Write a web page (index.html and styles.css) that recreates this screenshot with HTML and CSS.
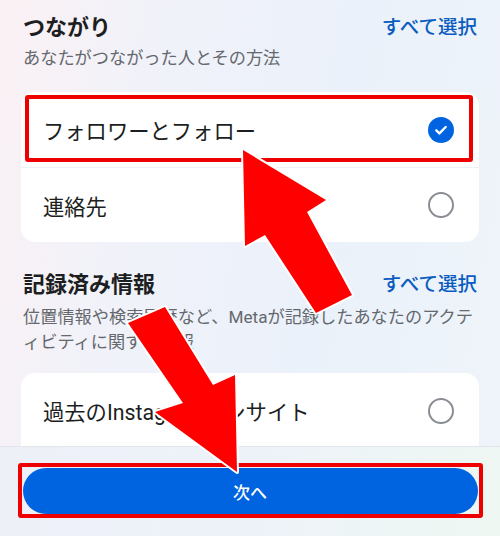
FILE: index.html
```html
<!DOCTYPE html>
<html lang="ja">
<head>
  <meta charset="UTF-8" />
  <title>情報を選択</title>
  <link rel="stylesheet" href="styles.css">
</head>
<body>

  <div class="content">
    <div class="section-head">
      <h2 class="section-title">つながり</h2>
      <a class="select-all" href="#">すべて選択</a>
    </div>
    <p class="section-desc">あなたがつながった人とその方法</p>

    <div class="card">
      <div class="row">
        <span class="row-label">フォロワーとフォロー</span>
        <span class="check on">
          <svg width="26" height="26" viewBox="0 0 26 26"><circle cx="13" cy="13" r="13" fill="#0064e0"/><path d="M8.3 13.4l3.1 3 6.3-6.4" fill="none" stroke="#fff" stroke-width="2.4" stroke-linecap="round" stroke-linejoin="round"/></svg>
        </span>
      </div>
      <div class="row">
        <span class="row-label">連絡先</span>
        <span class="check"></span>
      </div>
    </div>

    <div class="section-head second">
      <h2 class="section-title">記録済み情報</h2>
      <a class="select-all" href="#">すべて選択</a>
    </div>
    <p class="section-desc lines">位置情報や検索履歴など、Metaが記録したあなたのアクテ<br>ィビティに関する情報</p>

    <div class="card">
      <div class="row">
        <span class="row-label">過去のInstagramインサイト</span>
        <span class="check"></span>
      </div>
      <div class="row">
        <span class="row-label">広告の情報</span>
        <span class="check"></span>
      </div>
    </div>
  </div>

  <div class="bottom-bar">
    <button class="next-btn">次へ</button>
  </div>

  <!-- annotation overlay -->
  <div class="mark mark-row"></div>
  <div class="mark mark-btn"></div>
  <svg class="arrows" width="500" height="536" viewBox="0 0 500 536">
    <polygon points="243,150 326,200 307,212 352,295 316,313 265,235 245,246" />
    <polygon points="165,307 213,385 235,375 237,472 155,412 183,403 128,323" />
  </svg>

</body>
</html>
```

FILE: styles.css
```css
body {
  margin: 0;
  width: 500px;
  height: 536px;
  overflow: hidden;
  position: relative;
  font-family: Roboto, "Noto Sans CJK JP", sans-serif;
  color: #1c1e21;
  background: linear-gradient(100deg, #fbf1f4 0%, #f1f2f9 25%, #ebf1fa 60%, #eef4f9 100%);
}

.content {
  padding: 13px 21px 0;
}

.section-head {
  display: flex;
  justify-content: space-between;
  align-items: center;
  padding: 0 2px;
}

.section-head.second {
  margin-top: 28px;
}

.section-title {
  margin: 0;
  font-size: 22px;
  line-height: 30px;
  font-weight: 700;
}

.select-all {
  font-size: 19.5px;
  line-height: 30px;
  font-weight: 500;
  color: #0b5cc0;
  text-decoration: none;
}

.section-desc {
  margin: 2px 0 21px;
  padding: 0 2px;
  font-size: 17.2px;
  line-height: 26px;
  color: #65686d;
}

.section-desc.lines {
  margin: 5px 0 18px;
  line-height: 25px;
  white-space: nowrap;
}

.card {
  background: #fff;
  border-radius: 14px;
  overflow: hidden;
}

.row {
  height: 75px;
  display: flex;
  align-items: center;
  justify-content: space-between;
  padding: 0 25px 0 22px;
}

.row + .row {
  border-top: 1px solid #f0f1f4;
  height: 74px;
}

.row-label {
  font-size: 21.3px;
  color: #1c1e21;
}

.check {
  width: 22px;
  height: 22px;
  border: 2.3px solid #8a8e94;
  border-radius: 50%;
  flex-shrink: 0;
}

.check.on {
  width: 26px;
  height: 26px;
  border: none;
  display: flex;
}

.bottom-bar {
  position: absolute;
  left: 0;
  right: 0;
  bottom: 0;
  height: 90px;
  border-top: 1px solid #e2e6ec;
  background: linear-gradient(100deg, #eef0f8 0%, #edf2f9 50%, #eef7f2 100%);
  display: flex;
  justify-content: center;
  padding-top: 21px;
  box-sizing: border-box;
}

.next-btn {
  width: 455px;
  height: 46px;
  border: none;
  border-radius: 23px;
  background: #0064e0;
  color: #fff;
  font-family: Roboto, "Noto Sans CJK JP", sans-serif;
  font-size: 17px;
  font-weight: 500;
}

.mark {
  position: absolute;
  border: 4px solid #ee0000;
  border-radius: 3px;
  box-sizing: border-box;
}

.mark-row {
  left: 25px;
  top: 95px;
  width: 448px;
  height: 67px;
}

.mark-btn {
  left: 18px;
  top: 463px;
  width: 465px;
  height: 55px;
}

.arrows {
  position: absolute;
  left: 0;
  top: 0;
}

.arrows polygon {
  fill: #ff0000;
  stroke: #fff;
  stroke-width: 4;
  stroke-linejoin: round;
  paint-order: stroke;
}
```
